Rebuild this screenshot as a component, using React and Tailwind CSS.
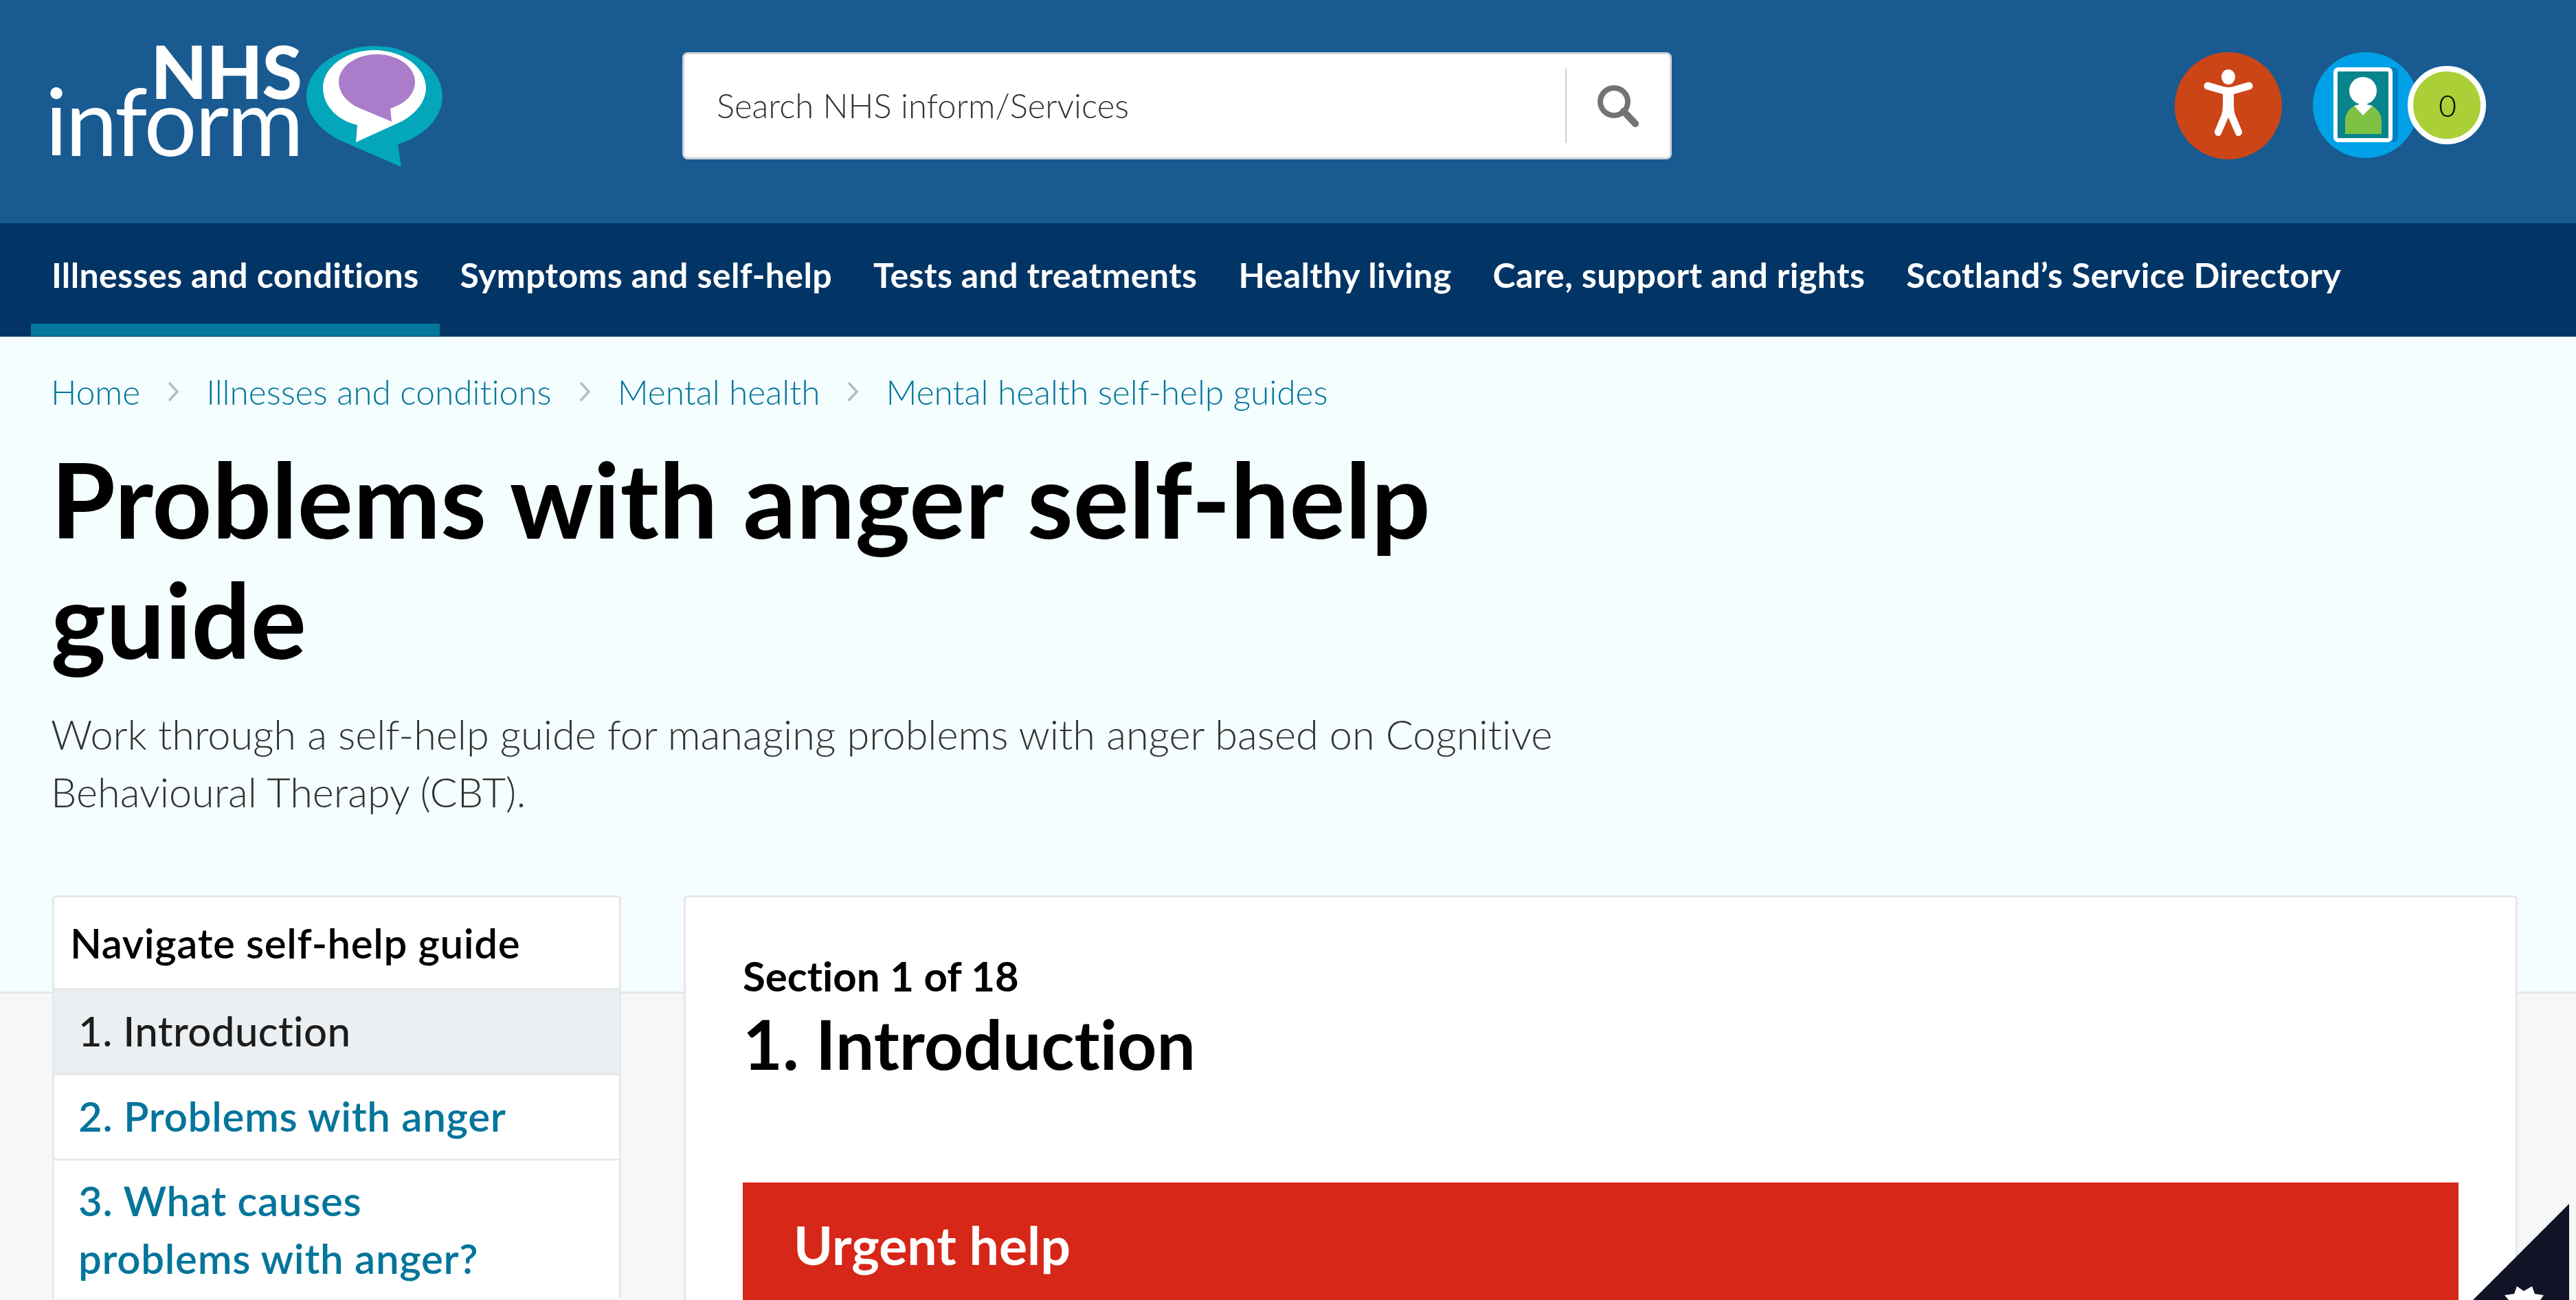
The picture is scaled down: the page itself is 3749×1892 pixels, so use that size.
const navItems = [
  "Illnesses and conditions",
  "Symptoms and self-help",
  "Tests and treatments",
  "Healthy living",
  "Care, support and rights",
  "Scotland’s Service Directory",
];

const crumbs = ["Home", "Illnesses and conditions", "Mental health", "Mental health self-help guides"];

function Logo() {
  return (
    <div className="-mt-[9px] flex w-[569px] h-[176px] items-start">
      <div className="flex w-[364px] shrink-0 flex-col items-end">
        <span className="-mt-[4px] font-black text-[106px] leading-[80px] text-white tracking-[-1px]">NHS</span>
        <span className="mt-[2px] text-[136px] leading-[60px] text-white tracking-[-3px]">inform</span>
      </div>
      <svg className="ml-[7px] shrink-0" width="198" height="176" viewBox="446 67 198 176">
        <path d="M492 203C463 187 446 165 446 140C446 100 490 67 545 67C599 67 644 100 644 140C644 172 616 199 579 210L584 243Z" fill="#03a6ba" />
        <path d="M520 182C490 175 470 153 470 128C470 98 503 73 545 73C586 73 620 98 620 128C620 147 606 165 584 177L518 207Z" fill="#fff" />
        <path d="M520 156C503 147 493 134 493 119C493 97 518 79 548 79C579 79 604 97 604 119C604 137 590 151 568 158L570 177Z" fill="#aa7cc9" />
      </svg>
    </div>
  );
}

function SearchBox() {
  return (
    <div className="ml-[349px] flex h-[156px] w-[1440px] items-center rounded-[8px] border-[3px] border-[#cdd3da] bg-white">
      <span className="ml-[47px] flex-1 font-light text-[49px] text-[#333]">Search NHS inform/Services</span>
      <div className="flex h-[108px] w-[152px] items-center justify-center border-l-2 border-[#d0d0d0]">
        <svg width="62" height="62" viewBox="0 0 62 62" fill="none" stroke="#737373">
          <circle cx="25" cy="25" r="20" strokeWidth="8" />
          <path d="M39 39L56 57" strokeWidth="10" strokeLinecap="round" />
        </svg>
      </div>
    </div>
  );
}

function AccessibilityButton() {
  return (
    <div className="flex h-[156px] w-[156px] items-center justify-center rounded-full bg-[#cc4516]">
      <svg className="mb-[8px]" width="72" height="98" viewBox="0 0 72 98" fill="#fff">
        <ellipse cx="36" cy="11" rx="10" ry="11" />
        <path d="M6 24L30 31Q36 32 42 31L66 24" fill="none" stroke="#fff" strokeWidth="11" strokeLinecap="round" />
        <path d="M28 32H44V52Q44 60 46 66L56 90C57 97 48 100 46 93L36 70L26 93C24 100 15 97 16 90L26 66Q28 60 28 52Z" />
      </svg>
    </div>
  );
}

function ProfileButton() {
  return (
    <div className="flex items-center">
      <div className="flex h-[154px] w-[154px] items-center justify-center rounded-full bg-[#00a1e6]">
        <svg width="94" height="110" viewBox="0 0 94 110">
          <rect x="6" y="0" width="88" height="109" rx="6" fill="#0080c0" />
          <rect x="3" y="3" width="80" height="103" rx="4" fill="#08848c" stroke="#fff" strokeWidth="6" />
          <ellipse cx="43" cy="34" rx="20" ry="20" fill="#fff" />
          <path d="M17 97V78C17 68 22 61 30 56L43 70L57 56C64 61 70 68 70 78V97Z" fill="#7dc242" />
          <path d="M37 50H49V54L57 56L43 70L30 56L37 54Z" fill="#fff" />
        </svg>
      </div>
      <div className="relative z-10 -ml-[16px] flex h-[114px] w-[114px] items-center justify-center rounded-full border-[8px] border-white bg-[#abcf37] pl-[2px] font-light text-[44px] text-black">
        0
      </div>
    </div>
  );
}

function Chevron() {
  return (
    <svg className="mx-[39px] shrink-0" width="18" height="30" viewBox="0 0 18 30" fill="none" stroke="#b4bbc2" strokeWidth="3.5">
      <path d="M3 2L15 15L3 28" />
    </svg>
  );
}

function Sidebar() {
  return (
    <aside className="h-fit w-[828px] shrink-0 rounded-t-[6px] border-[3px] border-b-0 border-[#e6e8e9] bg-white">
      <div className="flex h-[132px] items-center pl-[23px] text-[60px] tracking-[0.6px] font-semibold text-black">Navigate self-help guide</div>
      <div className="flex h-[124px] items-center border-t-[3px] border-[#e6e8e9] bg-[#ebeff2] pb-[3px] pl-[35px] text-[60px] tracking-[0.4px] font-medium text-[#1c1c1c]">1. Introduction</div>
      <div className="flex h-[124px] items-center border-t-[3px] border-[#e6e8e9] pb-[3px] pl-[35px] text-[60px] tracking-[0.7px] font-semibold text-[#04759b]">2. Problems with anger</div>
      <div className="border-t-[3px] border-[#e6e8e9] px-[35px] py-[16px] text-[60px] tracking-[0.7px] leading-[84px] font-semibold text-[#04759b]">
        3. What causes
        <br />
        problems with anger?
      </div>
    </aside>
  );
}

export default function App() {
  return (
    <div className="relative h-screen overflow-hidden bg-[#f6f8f8] font-['Lato',sans-serif] [font-variant-ligatures:none]">
      <header className="flex h-[325px] items-start bg-[#195a91] pt-[76px] pl-[75px]">
        <Logo />
        <SearchBox />
        <div className="ml-[732px]">
          <AccessibilityButton />
        </div>
        <div className="ml-[45px]">
          <ProfileButton />
        </div>
      </header>

      <nav className="flex h-[165px] bg-[#023565] pl-[45px]">
        {navItems.map((item, i) => (
          <a
            key={item}
            className={"flex h-[164px] items-center whitespace-nowrap border-b-[18px] px-[30px] pt-[4px] text-[50px] tracking-[0.4px] font-bold text-white " + (i === 0 ? "border-[#04759b]" : "border-transparent")}
          >
            {item}
          </a>
        ))}
      </nav>

      <section className="h-[956px] border-b-[3px] border-[#e4e8e8] bg-[#f4feff] px-[74px] pt-[43px]">
        <div className="flex items-center text-[49.6px] font-light text-[#04759b]">
          {crumbs.map((c, i) => (
            <span key={c} className="flex items-center">
              {i > 0 && <Chevron />}
              {c}
            </span>
          ))}
        </div>
        <h1 className="mt-[31px] w-[2200px] text-[152px] leading-[175px] font-bold text-black">Problems with anger self-help guide</h1>
        <p className="mt-[38px] w-[2260px] text-[59.4px] leading-[84px] font-light text-[#333]">
          Work through a self-help guide for managing problems with anger based on Cognitive Behavioural Therapy (CBT).
        </p>
      </section>

      <div className="-mt-[143px] flex gap-[91px] pr-[85px] pl-[76px]">
        <Sidebar />
        <main className="flex-1 rounded-t-[6px] border-[3px] border-b-0 border-[#e6e8e9] bg-white px-[83px] pt-[78px]">
          <p className="text-[60px] leading-[72px] font-bold text-black">Section 1 of 18</p>
          <h2 className="mt-[2px] text-[100px] leading-[120px] font-bold text-black">1. Introduction</h2>
          <div className="mt-[143px] bg-[#d62718] px-[74px] pt-[46px] pb-[60px]">
            <p className="text-[77px] leading-[88px] font-bold text-white">Urgent help</p>
          </div>
        </main>
      </div>

      <svg className="absolute right-[10px] bottom-0" width="140" height="140" viewBox="0 0 140 140">
        <path d="M140 0V140H0Z" fill="#111327" />
        <path d="M64 120L74 127L86 120L90 131L103 133L98 140H52L46 133L60 131Z" fill="#fff" />
      </svg>
    </div>
  );
}
